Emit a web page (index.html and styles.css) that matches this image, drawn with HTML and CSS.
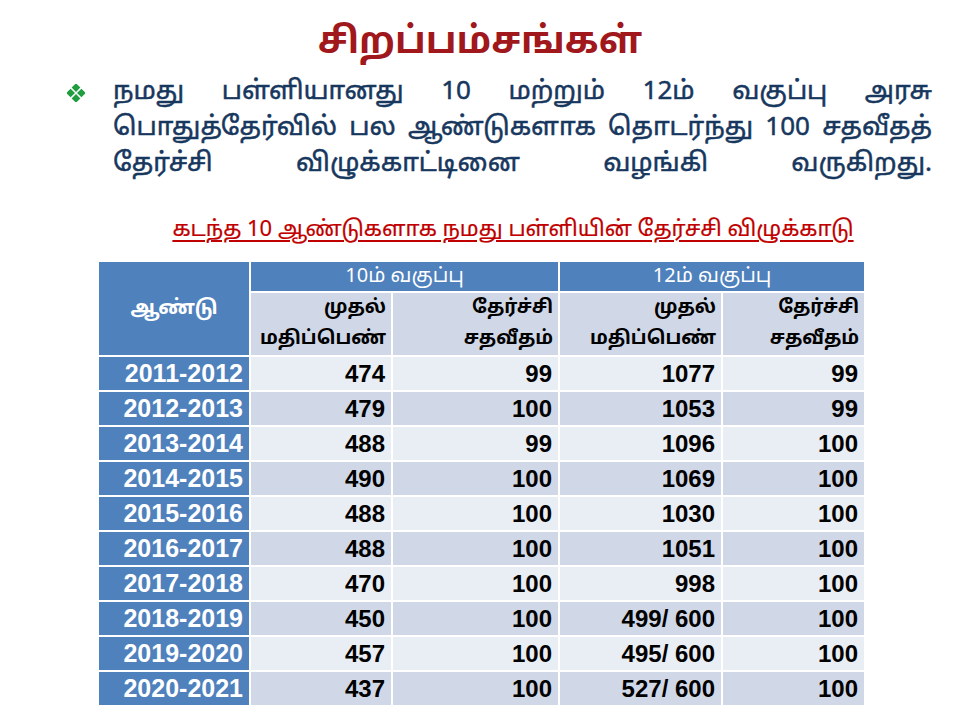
FILE: index.html
```html
<!DOCTYPE html>
<html lang="ta">
<head>
<meta charset="utf-8">
<title>சிறப்பம்சங்கள்</title>
<link rel="stylesheet" href="styles.css">
</head>
<body>
<div class="slide">
  <h1 class="title">சிறப்பம்சங்கள்</h1>
  <div class="bullet">
    <svg class="bicon" width="18" height="18" viewBox="0 0 20 20">
      <rect x="6.6" y="0.6" width="6.8" height="6.8" transform="rotate(45 10 4)" fill="#1e9e3e"/>
      <rect x="6.6" y="12.6" width="6.8" height="6.8" transform="rotate(45 10 16)" fill="#1e9e3e"/>
      <rect x="0.6" y="6.6" width="6.8" height="6.8" transform="rotate(45 4 10)" fill="#1e9e3e"/>
      <rect x="12.6" y="6.6" width="6.8" height="6.8" transform="rotate(45 16 10)" fill="#1e9e3e"/>
    </svg>
    <p class="btext">நமது பள்ளியானது 10 மற்றும் 12ம் வகுப்பு அரசு<br>பொதுத்தேர்வில் பல ஆண்டுகளாக தொடர்ந்து 100 சதவீதத்<br>தேர்ச்சி விழுக்காட்டினை வழங்கி வருகிறது.</p>
  </div>
  <div class="subtitle"><span>கடந்த 10 ஆண்டுகளாக நமது பள்ளியின் தேர்ச்சி விழுக்காடு</span></div>
  <table class="tbl">
    <colgroup>
      <col class="c1"><col class="c2"><col class="c3"><col class="c4"><col class="c5">
    </colgroup>
    <thead>
      <tr class="h1r">
        <th rowspan="2" class="yearh">ஆண்டு</th>
        <th colspan="2" class="grp">10ம் வகுப்பு</th>
        <th colspan="2" class="grp">12ம் வகுப்பு</th>
      </tr>
      <tr class="h2r">
        <th class="sub">முதல்<br>மதிப்பெண்</th>
        <th class="sub">தேர்ச்சி<br>சதவீதம்</th>
        <th class="sub">முதல்<br>மதிப்பெண்</th>
        <th class="sub">தேர்ச்சி<br>சதவீதம்</th>
      </tr>
    </thead>
    <tbody>
      <tr class="odd"><th>2011-2012</th><td>474</td><td>99</td><td>1077</td><td>99</td></tr>
      <tr class="even"><th>2012-2013</th><td>479</td><td>100</td><td>1053</td><td>99</td></tr>
      <tr class="odd"><th>2013-2014</th><td>488</td><td>99</td><td>1096</td><td>100</td></tr>
      <tr class="even"><th>2014-2015</th><td>490</td><td>100</td><td>1069</td><td>100</td></tr>
      <tr class="odd"><th>2015-2016</th><td>488</td><td>100</td><td>1030</td><td>100</td></tr>
      <tr class="even"><th>2016-2017</th><td>488</td><td>100</td><td>1051</td><td>100</td></tr>
      <tr class="odd"><th>2017-2018</th><td>470</td><td>100</td><td>998</td><td>100</td></tr>
      <tr class="even"><th>2018-2019</th><td>450</td><td>100</td><td>499/ 600</td><td>100</td></tr>
      <tr class="odd"><th>2019-2020</th><td>457</td><td>100</td><td>495/ 600</td><td>100</td></tr>
      <tr class="even"><th>2020-2021</th><td>437</td><td>100</td><td>527/ 600</td><td>100</td></tr>
    </tbody>
  </table>
</div>
</body>
</html>
```
FILE: styles.css
```css
* { box-sizing: border-box; }
html, body { margin: 0; padding: 0; background: #ffffff; }
body { font-family: "Noto Sans Tamil", "Noto Sans", "Liberation Sans", sans-serif; }
.slide { width: 960px; height: 720px; padding-top: 19px; display: flex; flex-direction: column; }
.title {
  margin: 0; text-align: center; color: #a0171c; font-size: 37px; font-weight: 700; line-height: 50px;
}
.bullet { display: flex; align-items: flex-start; padding-left: 67px; padding-right: 28px; margin-top: 6px; }
.bicon { margin-top: 9px; flex: none; }
.btext {
  margin: 0 0 0 28px; color: #17375e; font-size: 26px; font-weight: 400; line-height: 36px;
  -webkit-text-stroke: 0.5px #17375e;
  text-align: justify; text-align-last: justify; flex: 1;
}
.subtitle { text-align: center; padding-left: 66px; margin-top: 34px; }
.subtitle span { color: #c00000; font-size: 22px; text-decoration: underline; text-underline-offset: 4px; -webkit-text-stroke: 0.2px #c00000; }
.tbl {
  margin: 16px 0 0 97px; border-collapse: collapse; width: 767px; table-layout: fixed;
  font-family: "Liberation Sans", Arial, sans-serif;
}
.c1 { width: 152px; } .c2 { width: 142px; } .c3 { width: 167px; } .c4 { width: 163px; } .c5 { width: 143px; }
.tbl th, .tbl td { border: 2px solid #ffffff; padding: 0 5px; }
.yearh { background: #4f81bd; color: #fff; font-family: "Noto Sans Tamil", "Noto Sans", sans-serif; font-size: 20px; font-weight: 700; }
.grp { background: #4f81bd; color: #fff; font-weight: 400; font-size: 20px; height: 31px; font-family: "Noto Sans Tamil", "Noto Sans", sans-serif; }
.sub { background: #d0d8e8; color: #000; text-align: right; font-size: 19px; font-weight: 700; line-height: 31px; height: 64px; font-family: "Noto Sans Tamil", "Noto Sans", sans-serif; }
.tbl tbody th { background: #4f81bd; color: #fff; text-align: right; font-size: 25px; font-weight: 700; height: 35px; padding-right: 6px; }
.tbl tbody td { text-align: right; font-size: 24px; font-weight: 700; color: #000; padding-right: 6px; }
.odd td { background: #e9edf4; }
.even td { background: #d0d8e8; }
```
